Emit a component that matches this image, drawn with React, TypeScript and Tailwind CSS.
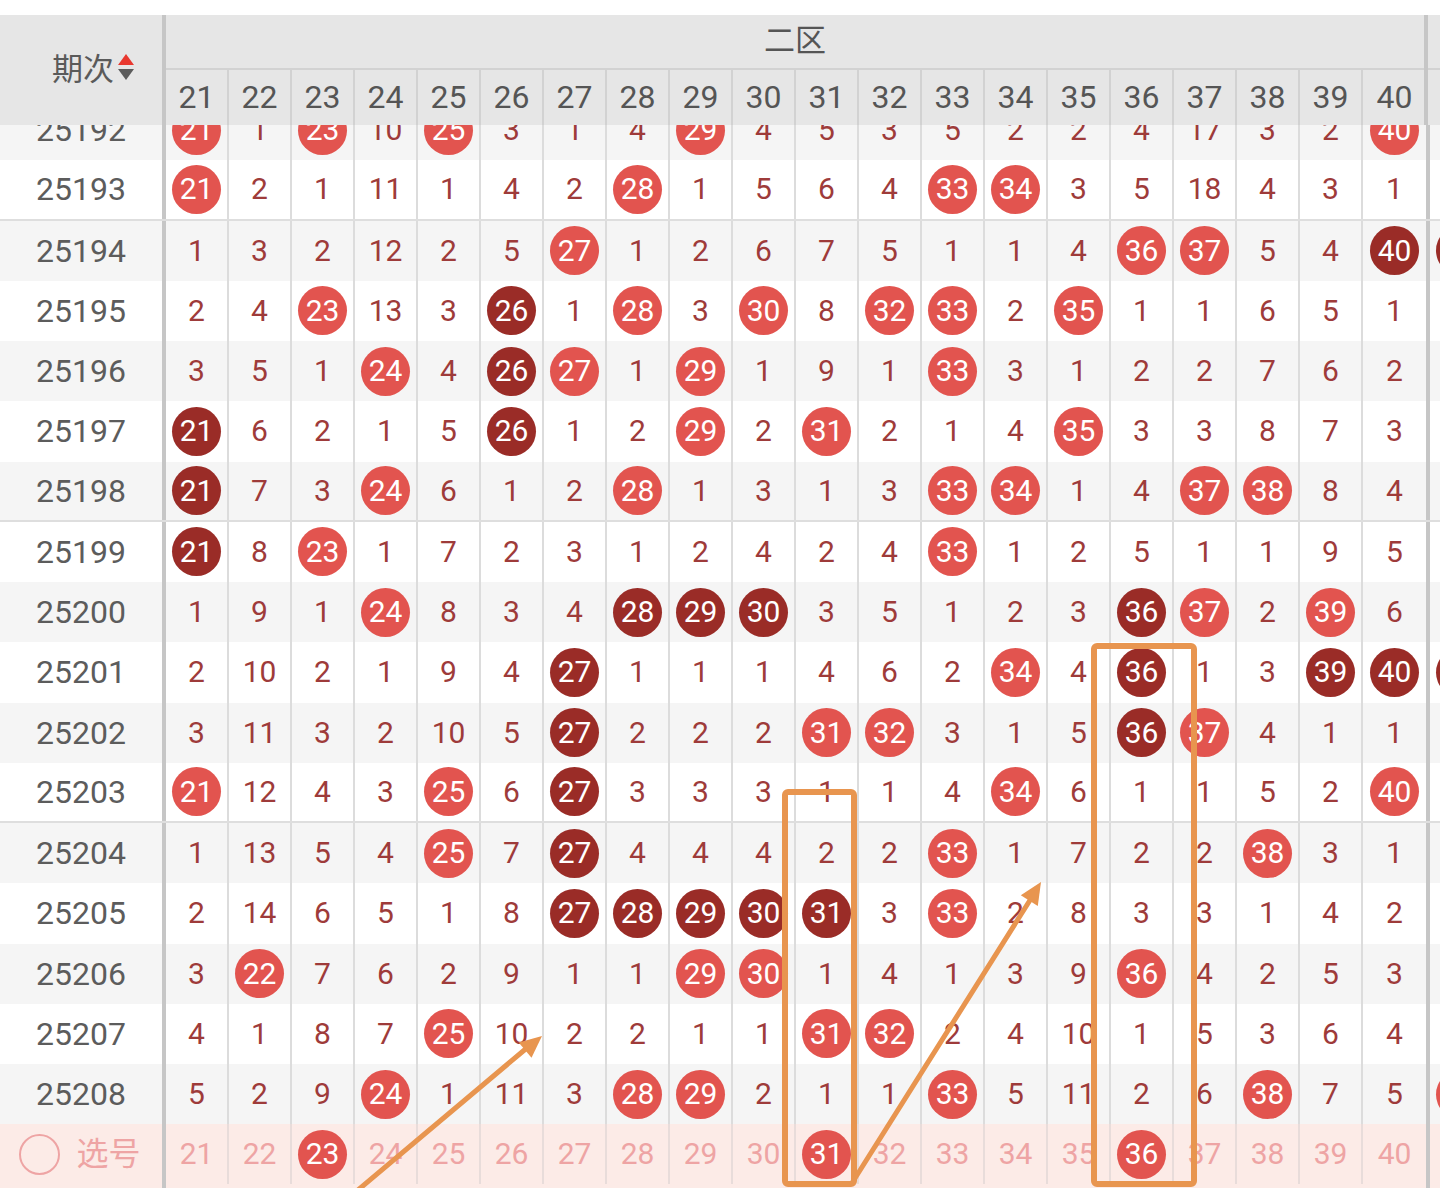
import React from "react";

const ROWS: [string, string][] = [
  ["25192", "L21 1 L23 10 L25 3 1 4 L29 4 5 3 5 2 2 4 17 3 2 L40 -"],
  ["25193", "L21 2 1 11 1 4 2 L28 1 5 6 4 L33 L34 3 5 18 4 3 1 -"],
  ["25194", "1 3 2 12 2 5 L27 1 2 6 7 5 1 1 4 L36 L37 5 4 D40 D41"],
  ["25195", "2 4 L23 13 3 D26 1 L28 3 L30 8 L32 L33 2 L35 1 1 6 5 1 -"],
  ["25196", "3 5 1 L24 4 D26 L27 1 L29 1 9 1 L33 3 1 2 2 7 6 2 -"],
  ["25197", "D21 6 2 1 5 D26 1 2 L29 2 L31 2 1 4 L35 3 3 8 7 3 -"],
  ["25198", "D21 7 3 L24 6 1 2 L28 1 3 1 3 L33 L34 1 4 L37 L38 8 4 -"],
  ["25199", "D21 8 L23 1 7 2 3 1 2 4 2 4 L33 1 2 5 1 1 9 5 -"],
  ["25200", "1 9 1 L24 8 3 4 D28 D29 D30 3 5 1 2 3 D36 L37 2 L39 6 -"],
  ["25201", "2 10 2 1 9 4 D27 1 1 1 4 6 2 L34 4 D36 1 3 D39 D40 D41"],
  ["25202", "3 11 3 2 10 5 D27 2 2 2 L31 L32 3 1 5 D36 L37 4 1 1 -"],
  ["25203", "L21 12 4 3 L25 6 D27 3 3 3 1 1 4 L34 6 1 1 5 2 L40 -"],
  ["25204", "1 13 5 4 L25 7 D27 4 4 4 2 2 L33 1 7 2 2 L38 3 1 -"],
  ["25205", "2 14 6 5 1 8 D27 D28 D29 D30 D31 3 L33 2 8 3 3 1 4 2 -"],
  ["25206", "3 L22 7 6 2 9 1 1 L29 L30 1 4 1 3 9 L36 4 2 5 3 -"],
  ["25207", "4 1 8 7 L25 10 2 2 1 1 L31 L32 2 4 10 1 5 3 6 4 -"],
  ["25208", "5 2 9 L24 1 11 3 L28 L29 2 1 1 L33 5 11 2 6 L38 7 5 L41"],
];

// rows that get the thicker gray line underneath
const LINED = ["25193", "25198", "25203"];

const NUMS = Array.from({ length: 20 }, (_, i) => String(21 + i));
const PICKED = ["23", "31", "36"];

function Ball({ n, dark }: { n: string; dark?: boolean }) {
  return (
    <div
      className={
        "w-[49px] h-[49px] rounded-full flex items-center justify-center text-white text-[30px] leading-none " +
        (dark ? "bg-[#9a2c27]" : "bg-[#e2544f]")
      }
    >
      {n}
    </div>
  );
}

function Cell({ v, last }: { v: string; last?: boolean }) {
  const kind = v[0];
  return (
    <div
      className={
        "w-[63px] shrink-0 h-full flex items-center justify-center " +
        (last ? "w-[61px]" : "border-r-2 border-[#dcdcdc]")
      }
    >
      {kind === "L" || kind === "D" ? (
        <Ball n={v.slice(1)} dark={kind === "D"} />
      ) : v === "-" ? null : (
        <span className="text-[30px] text-[#9e3b3a] leading-none">{v}</span>
      )}
    </div>
  );
}

function SortIcon() {
  return (
    <svg width="16" height="30" viewBox="0 0 16 30" className="ml-[4px]">
      <path d="M8 0 L16 11 L0 11 Z" fill="#e8382f" />
      <path d="M0 15 L16 15 L8 26 Z" fill="#5c5c5c" />
    </svg>
  );
}

function Divider() {
  return <div className="w-[4px] shrink-0 self-stretch bg-[#c6c6c6]" />;
}

export default function App() {
  return (
    <div
      className="relative w-[1440px] h-[1188px] overflow-hidden bg-white"
      style={{ fontFamily: 'Roboto, "Noto Sans CJK SC", sans-serif' }}
    >
      <div className="h-[15px]" />

      {/* sticky header */}
      <div className="relative z-10 flex h-[110px] bg-[#e6e6e6]">
        <div className="w-[162px] shrink-0 flex items-center justify-center pl-[24px] pb-[2px]">
          <span className="text-[31px] text-[#5a5a5a] leading-none">期次</span>
          <SortIcon />
        </div>
        <Divider />
        <div className="flex flex-col w-[1258px] shrink-0">
          <div className="h-[55px] flex items-center justify-center border-b-2 border-[#d2d2d2] text-[31px] text-[#555]">
            二区
          </div>
          <div className="flex flex-1">
            {NUMS.map((n, i) => (
              <div
                key={n}
                className={
                  "w-[63px] shrink-0 flex items-center justify-center pb-[2px] text-[32px] text-[#555] " +
                  (i === 19 ? "w-[61px]" : "border-r-2 border-[#d2d2d2]")
                }
              >
                {n}
              </div>
            ))}
          </div>
        </div>
        <Divider />
        <div className="flex flex-col w-[300px] shrink-0">
          <div className="h-[55px] border-b-2 border-[#d2d2d2]" />
          <div className="flex flex-1">
            <div className="w-[63px] flex items-center justify-center pb-[2px] text-[32px] text-[#555] border-r-2 border-[#d2d2d2]">
              41
            </div>
          </div>
        </div>
      </div>

      {/* rows, first one scrolled partly under the header */}
      <div className="-mt-[25px]">
        {ROWS.map(([period, data], r) => {
          const vals = data.split(" ");
          return (
            <div
              key={period}
              className={
                "flex h-[60.25px] " +
                (r % 2 === 0 ? "bg-[#f5f5f5] " : "bg-white ") +
                (LINED.includes(period) ? "border-b-2 border-[#dedede]" : "")
              }
            >
              <div className="w-[162px] shrink-0 flex items-center justify-center text-[32px] text-[#5c5c5c]">
                {period}
              </div>
              <Divider />
              {vals.slice(0, 20).map((v, i) => (
                <Cell key={i} v={v} last={i === 19} />
              ))}
              <Divider />
              <Cell v={vals[20]} />
            </div>
          );
        })}

        {/* pick row */}
        <div className="flex h-[64px] bg-[#fcebe7]">
          <div className="w-[162px] shrink-0 flex items-center justify-center gap-[16px] pr-[2px] pb-[4px]">
            <div className="w-[41px] h-[41px] rounded-full border-2 border-[#eea4a4]" />
            <span className="text-[32px] text-[#eea4a4] leading-none">选号</span>
          </div>
          <Divider />
          {NUMS.map((n, i) => (
            <div
              key={n}
              className={
                "w-[63px] shrink-0 h-[60px] flex items-center justify-center " +
                (i === 19 ? "w-[61px]" : "border-r-2 border-[#e8dcda]")
              }
            >
              {PICKED.includes(n) ? (
                <Ball n={n} />
              ) : (
                <span className="text-[30px] text-[#eea4a4] leading-none">{n}</span>
              )}
            </div>
          ))}
          <Divider />
          <div className="w-[63px] h-[60px]" />
        </div>
      </div>

      {/* hand-drawn annotations */}
      <svg
        className="absolute inset-0 z-20 pointer-events-none"
        width="1440"
        height="1188"
        viewBox="0 0 1440 1188"
      >
        <g fill="none" stroke="#e8954f" strokeWidth="6" strokeLinejoin="round">
          <rect x="785" y="792" width="69" height="392" rx="3" />
          <rect x="1094" y="646" width="100" height="538" rx="3" />
        </g>
        <g stroke="#e8954f" strokeWidth="5" strokeLinecap="round">
          <line x1="358" y1="1190" x2="528" y2="1047" />
          <line x1="852" y1="1183" x2="1032" y2="897" />
        </g>
        <g fill="#e8954f">
          <path d="M542 1036 L531.5 1057.8 L518.7 1042.4 Z" />
          <path d="M1041 882 L1037.8 905.9 L1020.8 895.3 Z" />
        </g>
      </svg>
    </div>
  );
}
